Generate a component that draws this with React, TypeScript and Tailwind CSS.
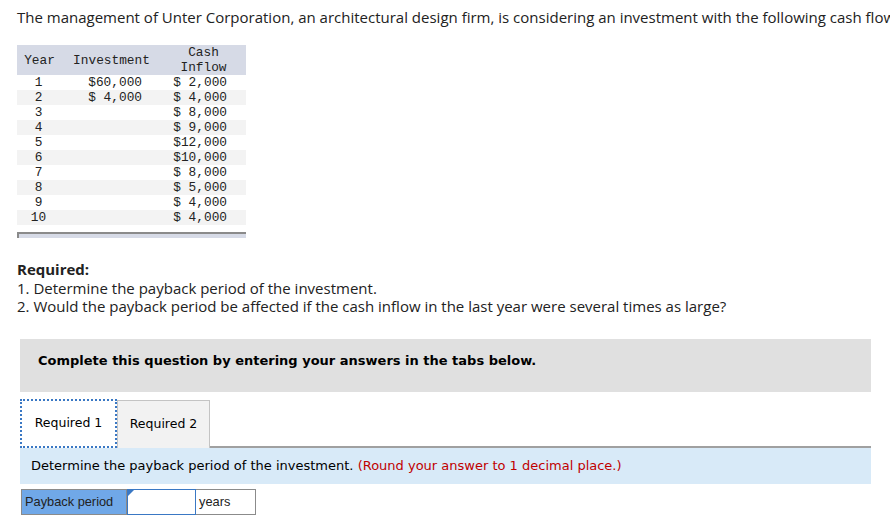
import React from "react";

const rows: [string, string, string][] = [
  ["1", "$60,000", "$ 2,000"],
  ["2", "$ 4,000", "$ 4,000"],
  ["3", "", "$ 8,000"],
  ["4", "", "$ 9,000"],
  ["5", "", "$12,000"],
  ["6", "", "$10,000"],
  ["7", "", "$ 8,000"],
  ["8", "", "$ 5,000"],
  ["9", "", "$ 4,000"],
  ["10", "", "$ 4,000"],
];

export default function App() {
  return (
    <div className="w-[890px] h-[520px] bg-white overflow-hidden text-[#222]">
      <p className="pl-[17px] pt-[7px] h-[20px] text-[15px] leading-[20px] whitespace-nowrap font-['Open_Sans',sans-serif]">
        The management of Unter Corporation, an architectural design firm, is considering an investment with the following cash flows:
      </p>

      <div className="ml-[17px] mt-[25px] w-[229px] font-['Liberation_Mono',monospace] text-[12.8px] text-[#222] whitespace-pre">
        <div className="grid grid-cols-[45px_99px_85px] h-[30px] bg-[#d6dae6] items-center leading-[15px]">
          <div className="text-center">Year</div>
          <div className="text-center">Investment</div>
          <div className="text-center">
            <div>Cash</div>
            <div>Inflow</div>
          </div>
        </div>
        {rows.map((r, i) => (
          <div
            key={i}
            className={`grid grid-cols-[45px_99px_85px] h-[15px] leading-[15px] ${i % 2 === 1 ? "bg-[#f3f3f3]" : "bg-white"}`}
          >
            <div className="text-center pr-[2px]">{r[0]}</div>
            <div className="text-right pr-[19px]">{r[1]}</div>
            <div className="text-right pr-[19px]">{r[2]}</div>
          </div>
        ))}
        <div className="mt-[7px] h-[6px] border-t-2 border-l-2 border-[#8a8a8a] bg-[#d6dae6]" />
      </div>

      <div className="ml-[17px] mt-[22px] text-[15px] leading-[18.5px] font-['Open_Sans',sans-serif] text-[#222]">
        <p className="font-bold">Required:</p>
        <p>1. Determine the payback period of the investment.</p>
        <p>2. Would the payback period be affected if the cash inflow in the last year were several times as large?</p>
      </div>

      <div className="ml-[20px] mt-[23px] w-[851px] h-[53px] bg-[#e0e0e0] pt-[14px] pl-[18px] leading-[16px] font-['DejaVu_Sans',sans-serif] text-[13px] font-bold text-black">
        Complete this question by entering your answers in the tabs below.
      </div>

      <div className="ml-[20px] mt-[7px] w-[851px] font-['DejaVu_Sans',sans-serif] text-[12.5px]">
        <div className="flex h-[49px] border-b-2 border-[#a0a0a0]">
          <div className="w-[97px] h-[49px] border-2 border-dotted border-[#3a78c4] bg-white flex items-center justify-center text-black">
            Required 1
          </div>
          <div className="w-[93px] h-[48px] mt-[1px] border border-[#c4c4c4] border-b-0 bg-[#f2f2f2] flex items-center justify-center text-black">
            Required 2
          </div>
        </div>
        <div className="h-[36px] bg-[#d8eaf8] flex items-center pl-[11px] text-[13px] text-black whitespace-nowrap">
          Determine the payback period of the investment.&nbsp;
          <span className="text-[#c00000]">(Round your answer to 1 decimal place.)</span>
        </div>
      </div>

      <div className="ml-[21px] mt-[5px] flex h-[26px] font-['Liberation_Sans',sans-serif] text-[12.8px] text-[#222]">
        <div className="w-[106px] h-[26px] bg-[#70a8e8] border border-[#8b8b8b] flex items-center pl-[3px]">
          Payback period
        </div>
        <div className="relative w-[69px] h-[26px] bg-white border border-[#3a78c4]">
          <div className="absolute left-0 top-0 w-0 h-0 border-t-[6px] border-t-[#3a78c4] border-r-[6px] border-r-transparent" />
        </div>
        <div className="w-[60px] h-[26px] bg-white border border-[#8b8b8b] border-l-0 flex items-center pl-[3px]">
          years
        </div>
      </div>
    </div>
  );
}
